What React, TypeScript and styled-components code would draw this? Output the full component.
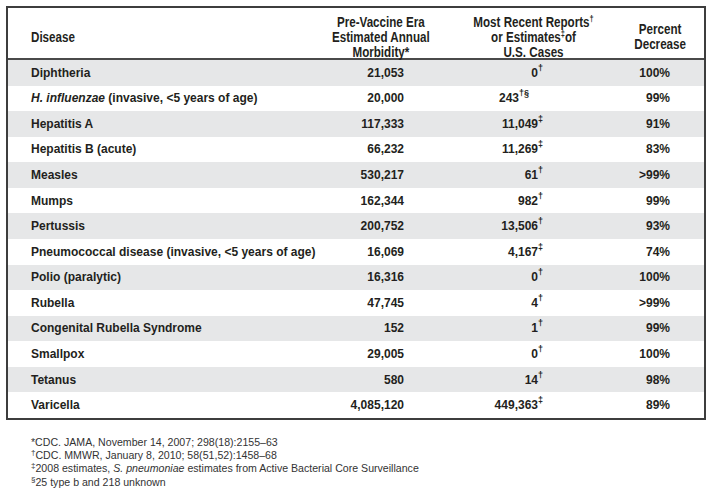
import React from "react";
import styled, { createGlobalStyle } from "styled-components";

const Global = createGlobalStyle`
  html, body { margin: 0; padding: 0; background: #ffffff; }
  body { font-family: "Liberation Sans", Arial, sans-serif; color: #231f20; }
`;

const Page = styled.div`
  width: 713px;
  height: 497px;
  padding: 6px 0 0 6px;
  box-sizing: border-box;
`;

const Table = styled.div`
  width: 700px;
  border: 2px solid #3d3d3d;
  box-sizing: border-box;
  display: grid;
  grid-template-columns: 322px 102px 200px 72px;
`;

const HeadCell = styled.div<{ $align?: "left" | "center"; $pl?: number; $pr?: number }>`
  height: 52px;
  padding-top: 8px;
  box-sizing: border-box;
  border-bottom: 2px solid #4a4a4a;
  display: flex;
  align-items: center;
  justify-content: ${(p) => (p.$align === "left" ? "flex-start" : "center")};
  padding-left: ${(p) => p.$pl ?? 0}px;
  padding-right: ${(p) => p.$pr ?? 0}px;
  font-family: "Liberation Sans Narrow", "Arial Narrow", "Liberation Sans", sans-serif;
  font-weight: 700;
  font-size: 14px;
  line-height: 15px;
  color: #231f20;
`;

const HeadText = styled.span<{ $origin?: string }>`
  display: inline-block;
  flex: none;
  white-space: nowrap;
  text-align: center;
  transform: scaleX(0.83);
  transform-origin: ${(p) => p.$origin ?? "center"};
`;

const Cell = styled.div<{ $shade: boolean }>`
  height: 25.57px;
  display: flex;
  align-items: center;
  background: ${(p) => (p.$shade ? "#e6e7e8" : "#ffffff")};
  font-weight: 700;
  font-size: 12px;
  color: #231f20;
  white-space: nowrap;
`;

const NameCell = styled(Cell)`
  padding-left: 23px;
`;

const NumCell = styled(Cell)<{ $pr: number }>`
  justify-content: flex-end;
  padding-right: ${(p) => p.$pr}px;
`;

const RecentCell = styled(Cell)`
  display: grid;
  grid-template-columns: 106px auto;
  align-items: center;
`;

const Digits = styled.span<{ $shift?: number }>`
  text-align: right;
  margin-right: ${(p) => p.$shift ?? 0}px;
`;

const Sup = styled.span<{ $shift?: number }>`
  font-size: 9px;
  line-height: 0;
  position: relative;
  top: -5px;
  font-weight: 700;
  margin-left: ${(p) => (p.$shift ? -p.$shift : 0)}px;
`;

const HeadSup = styled.span`
  font-size: 9px;
  line-height: 0;
  position: relative;
  top: -5px;
`;

const Footnotes = styled.div`
  margin-top: 16px;
  padding-left: 25px;
  font-size: 10.6px;
  line-height: 13.3px;
  color: #333333;
`;

const FootLine = styled.div``;

const FootSup = styled.span`
  font-size: 8px;
  line-height: 0;
  position: relative;
  top: -4px;
`;

type Row = {
  name: React.ReactNode;
  pre: string;
  recent: string;
  sup: string;
  pct: string;
  shift?: number;
};

const rows: Row[] = [
  { name: "Diphtheria", pre: "21,053", recent: "0", sup: "†", pct: "100%" },
  {
    name: (
      <>
        <i>H. influenzae</i> (invasive, &lt;5 years of age)
      </>
    ),
    pre: "20,000",
    recent: "243",
    sup: "†§",
    pct: "99%",
    shift: 19,
  },
  { name: "Hepatitis A", pre: "117,333", recent: "11,049", sup: "‡", pct: "91%" },
  { name: "Hepatitis B (acute)", pre: "66,232", recent: "11,269", sup: "‡", pct: "83%" },
  { name: "Measles", pre: "530,217", recent: "61", sup: "†", pct: ">99%" },
  { name: "Mumps", pre: "162,344", recent: "982", sup: "†", pct: "99%" },
  { name: "Pertussis", pre: "200,752", recent: "13,506", sup: "†", pct: "93%" },
  {
    name: "Pneumococcal disease (invasive, <5 years of age)",
    pre: "16,069",
    recent: "4,167",
    sup: "‡",
    pct: "74%",
  },
  { name: "Polio (paralytic)", pre: "16,316", recent: "0", sup: "†", pct: "100%" },
  { name: "Rubella", pre: "47,745", recent: "4", sup: "†", pct: ">99%" },
  { name: "Congenital Rubella Syndrome", pre: "152", recent: "1", sup: "†", pct: "99%" },
  { name: "Smallpox", pre: "29,005", recent: "0", sup: "†", pct: "100%" },
  { name: "Tetanus", pre: "580", recent: "14", sup: "†", pct: "98%" },
  { name: "Varicella", pre: "4,085,120", recent: "449,363", sup: "‡", pct: "89%" },
];

export default function App() {
  return (
    <Page>
      <Global />
      <Table>
        <HeadCell $align="left" $pl={23}>
          <HeadText $origin="left center">Disease</HeadText>
        </HeadCell>
        <HeadCell>
          <HeadText>
            Pre-Vaccine Era
            <br />
            Estimated Annual
            <br />
            Morbidity*
          </HeadText>
        </HeadCell>
        <HeadCell $pl={4}>
          <HeadText>
            Most Recent Reports<HeadSup>†</HeadSup>
            <br />
            or Estimates<HeadSup>‡</HeadSup>of
            <br />
            U.S. Cases
          </HeadText>
        </HeadCell>
        <HeadCell $pr={16}>
          <HeadText>
            Percent
            <br />
            Decrease
          </HeadText>
        </HeadCell>
        {rows.map((r, i) => {
          const shade = i % 2 === 0;
          return (
            <React.Fragment key={i}>
              <NameCell $shade={shade}>
                <span>{r.name}</span>
              </NameCell>
              <NumCell $shade={shade} $pr={28}>
                {r.pre}
              </NumCell>
              <RecentCell $shade={shade}>
                <Digits $shift={r.shift}>{r.recent}</Digits>
                <Sup $shift={r.shift}>{r.sup}</Sup>
              </RecentCell>
              <NumCell $shade={shade} $pr={34}>
                {r.pct}
              </NumCell>
            </React.Fragment>
          );
        })}
      </Table>
      <Footnotes>
        <FootLine>*CDC. JAMA, November 14, 2007; 298(18):2155–63</FootLine>
        <FootLine>
          <FootSup>†</FootSup>CDC. MMWR, January 8, 2010; 58(51,52):1458–68
        </FootLine>
        <FootLine>
          <FootSup>‡</FootSup>2008 estimates, <i>S. pneumoniae</i> estimates from Active Bacterial
          Core Surveillance
        </FootLine>
        <FootLine>
          <FootSup>§</FootSup>25 type b and 218 unknown
        </FootLine>
      </Footnotes>
    </Page>
  );
}
